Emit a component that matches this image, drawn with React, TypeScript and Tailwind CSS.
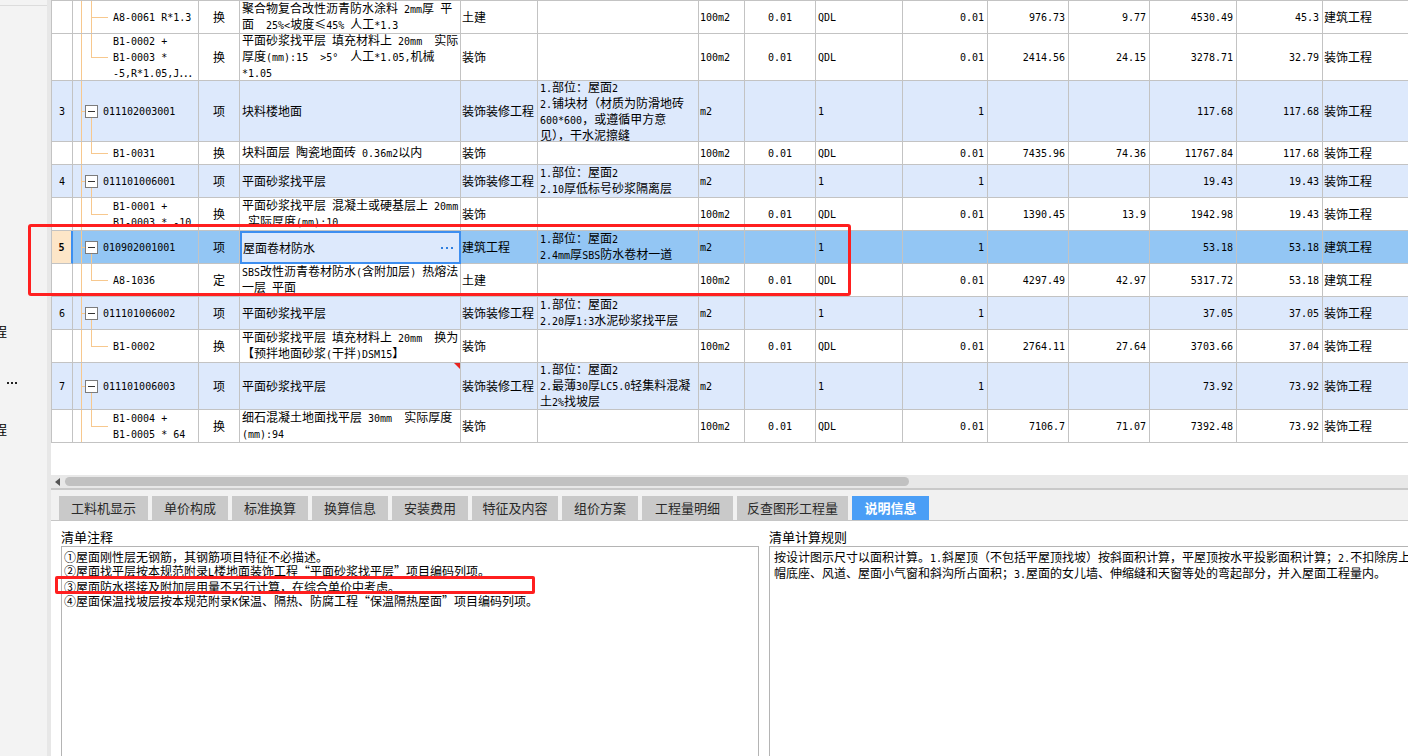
import React from 'react';

const CJK = /([\u2000-\u206F\u2190-\u2BFF\u2E80-\u9FFF\uF900-\uFAFF\uFE30-\uFE4F\uFF00-\uFFEF\u3000-\u303F]+)/;

function M({ s }: { s: string }) {
  const parts = s.split(CJK);
  return (
    <>
      {parts.map((p, i) =>
        p === '' ? null : i % 2 === 1 ? (
          <span key={i} className="font-['Noto_Sans_CJK_SC',sans-serif] text-[12px]">
            {p}
          </span>
        ) : (
          <span key={i} className="font-['DejaVu_Sans_Mono',monospace] text-[10px]">
            {p}
          </span>
        )
      )}
    </>
  );
}

function Lines({ lines }: { lines: string[] }) {
  return (
    <div className="leading-[14px] whitespace-pre">
      {lines.map((l, i) => (
        <div key={i}>
          <M s={l} />
        </div>
      ))}
    </div>
  );
}

type Row = {
  kind: 'item' | 'child';
  h: string;
  no?: string;
  code: string[];
  type: string;
  name: string[];
  spec: string;
  feat: string[];
  unit: string;
  hl: string;
  expr: string;
  qty: string;
  price: string;
  total: string;
  up: string;
  ut: string;
  fee: string;
  last?: boolean;
  sel?: boolean;
  flag?: boolean;
};

const rows: Row[] = [
  {
    kind: 'child', h: 'h-[33px]', code: ['A8-0061 R*1.3'], type: '换',
    name: ['聚合物复合改性沥青防水涂料 2mm厚 平', '面  25%<坡度≤45% 人工*1.3'], spec: '土建', feat: [],
    unit: '100m2', hl: '0.01', expr: 'QDL', qty: '0.01', price: '976.73', total: '9.77', up: '4530.49', ut: '45.3', fee: '建筑工程',
  },
  {
    kind: 'child', h: 'h-[47px]', last: true, code: ['B1-0002 +', 'B1-0003 *', '-5,R*1.05,J…'], type: '换',
    name: ['平面砂浆找平层 填充材料上 20mm  实际', '厚度(mm):15  >5°  人工*1.05,机械', '*1.05'], spec: '装饰', feat: [],
    unit: '100m2', hl: '0.01', expr: 'QDL', qty: '0.01', price: '2414.56', total: '24.15', up: '3278.71', ut: '32.79', fee: '装饰工程',
  },
  {
    kind: 'item', h: 'h-[61px]', no: '3', code: ['011102003001'], type: '项', name: ['块料楼地面'], spec: '装饰装修工程',
    feat: ['1.部位：屋面2', '2.铺块材（材质为防滑地砖', '600*600，或遵循甲方意', '见），干水泥擦缝'],
    unit: 'm2', hl: '', expr: '1', qty: '1', price: '', total: '', up: '117.68', ut: '117.68', fee: '装饰工程',
  },
  {
    kind: 'child', h: 'h-[23px]', last: true, code: ['B1-0031'], type: '换', name: ['块料面层 陶瓷地面砖 0.36m2以内'], spec: '装饰', feat: [],
    unit: '100m2', hl: '0.01', expr: 'QDL', qty: '0.01', price: '7435.96', total: '74.36', up: '11767.84', ut: '117.68', fee: '装饰工程',
  },
  {
    kind: 'item', h: 'h-[33px]', no: '4', code: ['011101006001'], type: '项', name: ['平面砂浆找平层'], spec: '装饰装修工程',
    feat: ['1.部位：屋面2', '2.10厚低标号砂浆隔离层'],
    unit: 'm2', hl: '', expr: '1', qty: '1', price: '', total: '', up: '19.43', ut: '19.43', fee: '装饰工程',
  },
  {
    kind: 'child', h: 'h-[33px]', last: true, code: ['B1-0001 +', 'B1-0003 * -10'], type: '换',
    name: ['平面砂浆找平层 混凝土或硬基层上 20mm', ' 实际厚度(mm):10'], spec: '装饰', feat: [],
    unit: '100m2', hl: '0.01', expr: 'QDL', qty: '0.01', price: '1390.45', total: '13.9', up: '1942.98', ut: '19.43', fee: '装饰工程',
  },
  {
    kind: 'item', h: 'h-[33px]', no: '5', sel: true, code: ['010902001001'], type: '项', name: ['屋面卷材防水'], spec: '建筑工程',
    feat: ['1.部位：屋面2', '2.4mm厚SBS防水卷材一道'],
    unit: 'm2', hl: '', expr: '1', qty: '1', price: '', total: '', up: '53.18', ut: '53.18', fee: '建筑工程',
  },
  {
    kind: 'child', h: 'h-[33px]', last: true, code: ['A8-1036'], type: '定',
    name: ['SBS改性沥青卷材防水(含附加层) 热熔法', '一层 平面'], spec: '土建', feat: [],
    unit: '100m2', hl: '0.01', expr: 'QDL', qty: '0.01', price: '4297.49', total: '42.97', up: '5317.72', ut: '53.18', fee: '建筑工程',
  },
  {
    kind: 'item', h: 'h-[33px]', no: '6', code: ['011101006002'], type: '项', name: ['平面砂浆找平层'], spec: '装饰装修工程',
    feat: ['1.部位：屋面2', '2.20厚1:3水泥砂浆找平层'],
    unit: 'm2', hl: '', expr: '1', qty: '1', price: '', total: '', up: '37.05', ut: '37.05', fee: '装饰工程',
  },
  {
    kind: 'child', h: 'h-[33px]', last: true, code: ['B1-0002'], type: '换',
    name: ['平面砂浆找平层 填充材料上 20mm  换为', '【预拌地面砂浆(干拌)DSM15】'], spec: '装饰', feat: [],
    unit: '100m2', hl: '0.01', expr: 'QDL', qty: '0.01', price: '2764.11', total: '27.64', up: '3703.66', ut: '37.04', fee: '装饰工程',
  },
  {
    kind: 'item', h: 'h-[47px]', no: '7', flag: true, code: ['011101006003'], type: '项', name: ['平面砂浆找平层'], spec: '装饰装修工程',
    feat: ['1.部位：屋面2', '2.最薄30厚LC5.0轻集料混凝', '土2%找坡层'],
    unit: 'm2', hl: '', expr: '1', qty: '1', price: '', total: '', up: '73.92', ut: '73.92', fee: '装饰工程',
  },
  {
    kind: 'child', h: 'h-[33px]', last: true, code: ['B1-0004 +', 'B1-0005 * 64'], type: '换',
    name: ['细石混凝土地面找平层 30mm  实际厚度', '(mm):94'], spec: '装饰', feat: [],
    unit: '100m2', hl: '0.01', expr: 'QDL', qty: '0.01', price: '7106.7', total: '71.07', up: '7392.48', ut: '73.92', fee: '装饰工程',
  },
];

const GRID =
  'grid grid-cols-[21px_126px_41px_221px_77px_161px_46px_71px_87px_85px_81px_81px_87px_86px_1fr]';
const CELL = 'border-r border-b border-[#c3c3c3] flex items-center overflow-hidden';
const TREE = 'bg-[#f7c88e]';

function TreeCell({ r }: { r: Row }) {
  return (
    <div className={`${CELL} relative`}>
      <div className={`absolute left-[8px] top-0 bottom-0 w-px ${TREE}`} />
      {r.kind === 'item' ? (
        <>
          <div className={`absolute left-[8px] top-1/2 w-[4px] h-px ${TREE}`} />
          <div className={`absolute left-[18px] top-[calc(50%+6px)] bottom-0 w-px ${TREE}`} />
          <div className="absolute left-[12px] top-[calc(50%-6px)] w-[13px] h-[13px] border border-[#7c7c7c] bg-white flex items-center justify-center">
            <div className="w-[7px] h-px bg-[#333]" />
          </div>
          <div className="pl-[30px]">
            <Lines lines={r.code} />
          </div>
        </>
      ) : (
        <>
          <div className={`absolute left-[18px] top-0 w-px ${TREE} ${r.last ? 'h-1/2' : 'bottom-0'}`} />
          <div className={`absolute left-[18px] top-1/2 w-[17px] h-px ${TREE}`} />
          <div className="pl-[40px]">
            <Lines lines={r.code} />
          </div>
        </>
      )}
    </div>
  );
}

function TableRow({ r }: { r: Row }) {
  const bg = r.sel ? 'bg-[#93c6f4]' : r.kind === 'item' ? 'bg-[#dde9fc]' : 'bg-white';
  const num = 'justify-end pr-[3px]';
  return (
    <div className={`${GRID} ${bg} ${r.h}`}>
      <div
        className={`${CELL} justify-center ${
          r.sel ? 'bg-[#fde6c8] font-bold border-r-2 border-r-[#3c8ff0]' : ''
        }`}
      >
        <M s={r.no ?? ''} />
      </div>
      <TreeCell r={r} />
      <div className={`${CELL} justify-center`}>
        <M s={r.type} />
      </div>
      {r.sel ? (
        <div className="border-2 border-[#3d8ef0] bg-[#dde9fc] flex items-center pl-[1px]">
          <Lines lines={r.name} />
          <div className="ml-auto mr-[6px] flex gap-[3px]">
            <div className="w-[2px] h-[2px] bg-[#2f7fe0]" />
            <div className="w-[2px] h-[2px] bg-[#2f7fe0]" />
            <div className="w-[2px] h-[2px] bg-[#2f7fe0]" />
          </div>
        </div>
      ) : (
        <div className={`${CELL} pl-[2px] relative`}>
          <Lines lines={r.name} />
          {r.flag && (
            <svg className="absolute top-0 right-0" width="6" height="6" viewBox="0 0 6 6">
              <polygon points="0,0 6,0 6,6" fill="#e8231f" />
            </svg>
          )}
        </div>
      )}
      <div className={`${CELL} pl-[1px]`}>
        <M s={r.spec} />
      </div>
      <div className={`${CELL} pl-[2px]`}>
        <Lines lines={r.feat} />
      </div>
      <div className={`${CELL} pl-[1px]`}>
        <M s={r.unit} />
      </div>
      <div className={`${CELL} justify-center`}>
        <M s={r.hl} />
      </div>
      <div className={`${CELL} pl-[2px]`}>
        <M s={r.expr} />
      </div>
      <div className={`${CELL} ${num}`}>
        <M s={r.qty} />
      </div>
      <div className={`${CELL} ${num}`}>
        <M s={r.price} />
      </div>
      <div className={`${CELL} ${num}`}>
        <M s={r.total} />
      </div>
      <div className={`${CELL} ${num}`}>
        <M s={r.up} />
      </div>
      <div className={`${CELL} ${num}`}>
        <M s={r.ut} />
      </div>
      <div className="border-b border-[#c3c3c3] flex items-center pl-[1px] overflow-hidden whitespace-nowrap">
        <M s={r.fee} />
      </div>
    </div>
  );
}

const tabs: { label: string; w: string; active?: boolean }[] = [
  { label: '工料机显示', w: 'w-[89px]' },
  { label: '单价构成', w: 'w-[76px]' },
  { label: '标准换算', w: 'w-[76px]' },
  { label: '换算信息', w: 'w-[76px]' },
  { label: '安装费用', w: 'w-[76px]' },
  { label: '特征及内容', w: 'w-[86px]' },
  { label: '组价方案', w: 'w-[76px]' },
  { label: '工程量明细', w: 'w-[91px]' },
  { label: '反查图形工程量', w: 'w-[111px]' },
  { label: '说明信息', w: 'w-[77px]', active: true },
];

const notes = [
  '①屋面刚性层无钢筋，其钢筋项目特征不必描述。',
  '②屋面找平层按本规范附录L楼地面装饰工程“平面砂浆找平层”项目编码列项。',
  '③屋面防水搭接及附加层用量不另行计算，在综合单价中考虑。',
  '④屋面保温找坡层按本规范附录K保温、隔热、防腐工程“保温隔热屋面”项目编码列项。',
];

const rules = [
  '按设计图示尺寸以面积计算。1.斜屋顶（不包括平屋顶找坡）按斜面积计算，平屋顶按水平投影面积计算；2.不扣除房上烟囱、风',
  '帽底座、风道、屋面小气窗和斜沟所占面积；3.屋面的女儿墙、伸缩缝和天窗等处的弯起部分，并入屋面工程量内。',
];

export default function App() {
  return (
    <div className="relative w-[1408px] h-[756px] overflow-hidden bg-white flex font-['Noto_Sans_CJK_SC',sans-serif] text-[12px] text-black">
      {/* left clipped panel */}
      <div className="w-[51px] shrink-0 flex bg-[#f3f3f3]">
        <div className="w-[47px] flex flex-col overflow-hidden">
          <div className="mt-[5px] h-px bg-[#dcdcdc]" />
          <div className="mt-[318px] -ml-[6px] text-[13px] leading-[14px]">程</div>
          <div className="mt-[44px] ml-[7px] flex gap-[2px]">
            <div className="w-[2px] h-[2px] bg-[#222]" />
            <div className="w-[2px] h-[2px] bg-[#222]" />
            <div className="w-[2px] h-[2px] bg-[#222]" />
          </div>
          <div className="mt-[38px] -ml-[6px] text-[13px] leading-[14px]">程</div>
        </div>
        <div className="w-[4px] bg-[#e7e7e7]" />
      </div>

      {/* main */}
      <div className="flex-1 min-w-0 flex flex-col">
        <div className="h-[488px] shrink-0 flex flex-col">
          <div className="border-l border-t border-[#c3c3c3]">
            {rows.map((r, i) => (
              <TableRow key={i} r={r} />
            ))}
          </div>
          <div className="flex-1 bg-white" />
          <div className="h-[13px] shrink-0 bg-[#e8e8e8] flex items-center">
            <svg className="ml-[4px]" width="5" height="8" viewBox="0 0 5 8">
              <polygon points="5,0 0,4 5,8" fill="#555" />
            </svg>
            <div className="ml-[5px] w-[844px] h-[9px] rounded-full bg-[#c1c1c1]" />
          </div>
        </div>
        <div className="h-[2px] shrink-0 bg-[#c9c9c9]" />
        <div className="h-[31px] shrink-0 bg-[#f1f1f1] border-b border-[#c6c6c6] pt-[6px] pl-[8px] flex gap-[4px]">
          {tabs.map((t) => (
            <div
              key={t.label}
              className={`${t.w} h-[24px] flex items-center justify-center text-[13px] ${
                t.active ? 'bg-[#4a9ef6] text-white font-bold' : 'bg-[#c9c9c9] text-[#2a2a2a]'
              }`}
            >
              {t.label}
            </div>
          ))}
        </div>
        <div className="flex-1 min-h-0 overflow-hidden flex bg-white">
          <div className="w-[713px] shrink-0 pl-[10px] flex flex-col">
            <div className="pt-[6px] h-[25px] shrink-0 text-[13px] leading-[19px]">清单注释</div>
            <div className="w-[698px] h-[230px] shrink-0 border border-[#b4b4b4] pt-[3px] pl-[2px] leading-[14px] whitespace-pre">
              {notes.map((n, i) => (
                <div key={i}>
                  <M s={n} />
                </div>
              ))}
            </div>
          </div>
          <div className="flex-1 min-w-0 pl-[5px] flex flex-col">
            <div className="pt-[6px] h-[25px] shrink-0 text-[13px] leading-[19px]">清单计算规则</div>
            <div className="h-[230px] shrink-0 border-l border-t border-[#b4b4b4] pt-[3px] pl-[4px] leading-[14px] whitespace-pre overflow-hidden">
              {rules.map((n, i) => (
                <div key={i}>
                  <M s={n} />
                </div>
              ))}
            </div>
          </div>
        </div>
      </div>

      {/* red annotation boxes */}
      <div className="absolute left-[28px] top-[224px] w-[823px] h-[72px] border-[3px] border-[#ff1f1f] rounded-[3px] pointer-events-none" />
      <div className="absolute left-[55px] top-[576px] w-[480px] h-[18px] border-[3px] border-[#ff1f1f] rounded-[2px] pointer-events-none" />
    </div>
  );
}
